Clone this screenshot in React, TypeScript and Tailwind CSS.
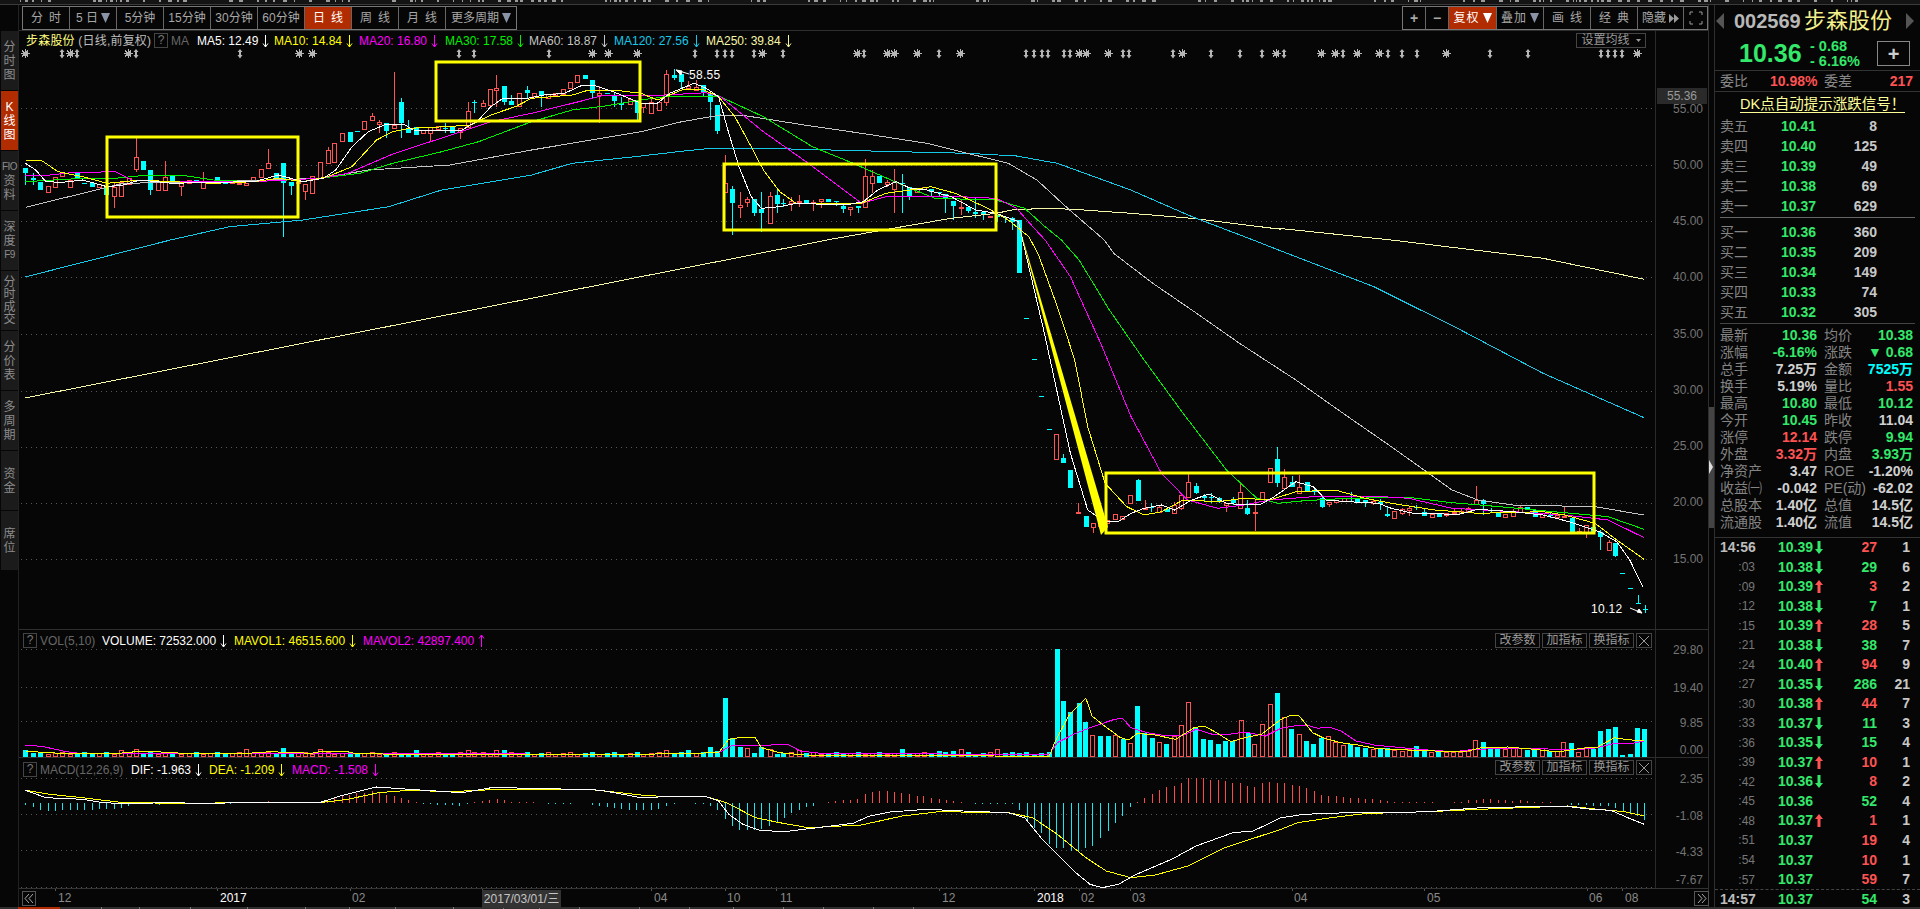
import React from "react";

type Pt = [number, number];
type Candle = { x: number; t: number; b: number; h: number; l: number; up: boolean };

const RED = "#ff5252";
const GREEN = "#33e86a";
const CYAN = "#00ffff";

// traced from crops of the chart, each crop has its own scale
const pa = (x: number, y: number): Pt => [x / 2.45, y / 3];
const pb = (x: number, y: number): Pt => [640 + x / 2.45, y / 3];
const pc = (x: number, y: number): Pt => [1000 + x / 2.306, 220 + y / 3];
const va = (x: number, y: number): Pt => [x / 2.45, 620 + y / 3];
const vb = (x: number, y: number): Pt => [640 + x / 2.45, 620 + y / 3];
const vc = (x: number, y: number): Pt => [1280 + x / 3, 620 + y / 3];

const flat = (fn: (x: number, y: number) => Pt, n: number[]): Pt[] => {
  const out: Pt[] = [];
  for (let i = 0; i < n.length; i += 2) out.push(fn(n[i], n[i + 1]));
  return out;
};
const toPoints = (p: Pt[]) => p.map(([x, y]) => `${x.toFixed(1)},${y.toFixed(1)}`).join(" ");

const ma5 = [
  ...flat(pa, [60,490,85,510,110,545,150,547,200,540,260,560,300,555,340,540,420,550,520,547,620,545,680,525,740,545,790,535,820,510,860,440,900,395,945,372,990,375,1010,390,1090,393,1130,390,1170,360,1200,320,1230,295,1290,295,1330,285,1380,280,1420,258,1450,255,1500,275,1568,310]),
  ...flat(pb, [40,310,70,280,130,250,160,265,190,290,215,400,240,500,270,590,295,625,340,620,380,610,500,615,545,605,580,570,625,545,660,565,700,570,760,590,820,630,870,640,925,665]),
  ...flat(pc, [55,90,100,340,130,520,160,700,200,870,240,905,270,905,300,880,330,865,370,855,400,870,440,840,480,822,520,850,560,855,600,852,630,830,680,785,720,800,750,840,800,845,870,850,900,865,950,880,1000,880,1050,885,1100,868,1180,875,1250,885,1310,905,1380,935,1420,965,1450,1020,1480,1100]),
];
const ma10 = [
  ...flat(pa, [60,480,100,482,140,515,200,530,260,550,340,540,420,545,520,550,620,545,680,535,740,545,800,530,860,500,920,420,960,395,1000,385,1090,380,1150,375,1200,345,1260,320,1300,295,1400,285,1440,270,1500,270,1568,280]),
  ...flat(pb, [40,300,100,270,150,268,190,290,230,350,270,440,300,510,340,575,380,610,450,610,540,610,600,580,660,570,710,560,770,580,850,625,900,660,950,710]),
  ...flat(pc, [85,100,130,260,170,420,200,620,240,790,290,860,330,885,370,875,420,840,500,845,560,835,620,840,680,815,770,810,840,835,900,850,1000,870,1100,880,1250,875,1300,885,1370,910,1420,960,1483,1018]),
];
const ma20 = [
  ...flat(pa, [60,528,120,525,170,518,280,515,320,540,400,545,520,545,620,545,700,540,780,535,850,520,960,462,1040,430,1120,398,1200,365,1300,340,1400,310,1480,285,1568,285]),
  ...flat(pb, [60,285,160,278,195,290,300,395,410,490,540,610,600,590,680,590,780,590,870,595,920,625,960,680,990,720]),
  ...flat(pc, [160,170,230,370,300,590,370,760,430,840,500,865,560,855,620,840,740,828,880,830,940,835,1040,865,1180,875,1300,885,1400,900,1483,953]),
];
const ma30 = [
  ...flat(pa, [60,545,200,535,280,535,360,525,440,525,520,540,620,545,780,535,880,520,960,490,1080,455,1170,425,1300,365,1400,330,1480,318,1568,300]),
  ...flat(pb, [60,290,190,288,300,350,420,440,520,490,640,555,720,595,870,600,940,625,990,680,1030,720]),
  ...flat(pc, [180,120,250,270,330,420,420,580,520,750,590,835,640,850,700,842,800,835,940,832,1040,848,1150,860,1300,878,1400,890,1483,928]),
];
const ma60 = [
  ...flat(pa, [60,622,300,550,520,545,780,535,900,510,1100,495,1300,450,1568,395]),
  ...flat(pb, [100,365,195,345,260,348,400,375,540,400,700,430,800,460,900,490,970,540,1050,630,1135,720]),
  ...flat(pc, [260,100,350,190,440,270,550,370,680,480,800,590,900,680,1040,810,1100,840,1180,855,1370,860,1483,885]),
];
const ma120: Pt[] = [
  [24, 277],
  ...flat(pa, [415,720,560,680,740,660,950,620,1080,570,1300,525,1400,490,1568,468]),
  ...flat(pb, [90,455,170,445,300,445,630,455,800,460,920,468,1020,490,1200,570,1350,650,1500,720]),
  ...flat(pc, [640,90,860,200,1060,330,1250,460,1483,593]),
];
const ma250: Pt[] = [
  [24, 398],
  ...flat(pb, [465,718,640,680,760,655,870,640,910,630,990,625,1060,628,1200,640,1350,655,1568,688]),
  ...flat(pc, [640,25,900,60,1250,115,1483,178]),
];

const mavol1 = [
  ...flat(va, [60,390,90,393,160,398,280,398,330,392,380,392,460,398,590,398,660,392,760,397,780,392,850,392,870,398,1000,400,1350,400,1568,400]),
  ...flat(vb, [190,395,215,355,240,350,280,350,295,380,340,395,400,402,1000,406,1015,360,1050,280,1090,232,1105,285,1130,310,1175,350,1195,357,1215,338,1250,340,1310,355,1355,320,1380,315,1410,335,1445,362,1480,350,1520,340,1568,295]),
  ...flat(vc, [30,283,55,285,95,335,130,352,180,365,230,372,290,383,400,388,520,392,560,390,600,380,680,378,760,385,830,393,900,382,950,378,1000,350,1040,356,1090,360]),
];
const mavol2 = [
  ...flat(va, [60,373,100,376,160,392,200,398,400,397,650,397,860,398,1000,398,1568,400]),
  ...flat(vb, [190,395,220,375,280,374,360,370,390,390,450,398,1000,400,1020,365,1060,340,1100,320,1160,295,1180,292,1200,320,1240,335,1290,345,1330,342,1360,325,1400,340,1440,340,1480,333,1530,345,1568,322]),
  ...flat(vc, [50,313,80,313,110,322,145,318,180,330,225,360,280,372,380,382,450,388,520,392,580,385,700,382,800,384,900,385,950,380,1000,367,1050,368,1090,360]),
];
const dif = [
  ...flat(va, [60,508,110,530,200,535,250,545,310,548,400,545,500,547,600,545,700,545,780,545,830,525,880,510,920,498,1000,505,1130,515,1180,505,1210,498,1300,503,1440,505,1480,510,1568,530]),
  ...flat(vb, [60,527,160,527,190,540,215,580,250,610,290,628,350,632,420,622,520,607,560,585,610,573,700,565,790,570,900,575,940,590,980,650,1020,700,1060,750,1100,790,1130,800,1170,790,1210,762,1300,715,1360,675,1450,635,1500,630,1568,590]),
  ...flat(vc, [70,580,200,575,330,575,440,572,600,560,850,555,930,565,990,568,1040,590,1090,610]),
];
const dea = [
  ...flat(va, [60,508,120,520,200,530,300,545,450,547,600,545,780,545,850,535,925,515,1000,508,1100,512,1220,505,1440,505,1568,522]),
  ...flat(vb, [60,527,160,527,210,545,280,590,340,605,410,620,540,612,640,585,730,572,900,575,960,590,1020,640,1090,710,1140,750,1200,770,1260,762,1340,735,1430,680,1568,625]),
  ...flat(vc, [50,605,150,590,250,578,330,575,440,572,600,565,720,560,860,555,950,565,1030,572,1090,585]),
];

const mk = (fn: (x: number, y: number) => Pt, up: boolean) => (x: number, t: number, b: number, h?: number, l?: number): Candle => {
  const [rx, rt] = fn(x, t);
  const rb = fn(x, b)[1];
  return { x: rx, t: rt, b: rb, h: h === undefined ? rt : fn(x, h)[1], l: l === undefined ? rb : fn(x, l)[1], up };
};
const ar = mk(pa, true), ac = mk(pa, false), br = mk(pb, true), bc = mk(pb, false), cr = mk(pc, true), cc = mk(pc, false);

const candles: Candle[] = [
  ac(60,505,520,505,555),ac(78,535,540,520,555),ac(96,545,570),ar(114,558,575),ar(132,530,560),ar(150,517,527),ar(168,540,562),ac(186,520,538),ac(204,548,552),ac(222,548,560),ar(240,552,562),ac(258,560,585),ar(276,560,587,547,625),ar(295,545,587),ar(313,535,552),ar(331,470,507,413,515),ac(349,483,510),ac(366,510,570,510,585),ar(385,545,570),ar(403,530,570,483),ac(420,525,548),ar(440,545,558,545,588),ar(460,540,550),ac(478,540,548),ar(495,545,565,517),ar(512,545,550),ac(530,532,550),ac(548,548,553),ar(565,545,548),ar(583,548,552),ar(601,550,555),ar(618,530,543),ar(638,508,530),ar(655,490,505,447),ac(673,520,540),ac(692,490,550,490,710),ac(710,545,557,545,585),ar(728,545,548),ar(745,552,572,552,600),ar(763,527,578),ar(782,485,535),ar(800,450,490,440),ar(817,430,485),ar(836,398,422),ac(854,395,425),ac(872,392,396),ar(890,362,387),ar(908,347,360,340),ar(925,365,372,360,400),ac(944,370,392,370,415),ar(962,375,385,215),ac(981,305,370,295,415),ac(998,385,398,360),ac(1016,380,405),ar(1033,390,400),ar(1052,382,398,382,422),ar(1070,378,388),ac(1088,385,388,368,400),ac(1106,378,398),ar(1124,385,395,385,417),ar(1143,332,380,305),ac(1160,305,310,300,340),ar(1180,310,318,300),ar(1197,268,315),ar(1213,265,270,225,320),ac(1233,257,305,257,315),ac(1250,303,316,285),ar(1268,280,318),ac(1288,270,280,258,298),ar(1305,278,288),ac(1322,273,288,273,320),ar(1340,282,295),ar(1358,278,285),ar(1376,268,283),ar(1395,247,265),ar(1412,225,245),ac(1432,225,237),ac(1449,240,280,240,295),ar(1466,278,285,258,370),ac(1485,278,282),ac(1503,285,302,280,320),ac(1520,310,315,290,330),ar(1540,298,312),ac(1558,300,340,300,365),
  br(5,310,320,310,340),br(25,305,340,290),br(43,305,330),br(62,222,305,210,318),bc(80,225,235,208,240),bc(97,222,245,222,268),br(115,258,265,243),br(134,260,270,240),bc(152,255,275,255,290),bc(170,280,305,280,360),bc(187,315,392,315,402),br(205,548,575,465),bc(224,568,608,558,705),br(242,615,622,575,655),br(259,597,605,590,620),bc(278,598,638,598,648),bc(295,628,638,575,695),br(315,587,670,575),bc(332,585,612,570,640),bc(349,608,611,598,622),br(368,602,608,590,632),br(386,602,606,585,620),bc(404,600,608),br(422,605,608,600,632),br(440,598,603,598,625),bc(458,598,606),bc(477,603,606,603,618),bc(494,618,628,610,638),br(513,622,628,622,648),bc(531,618,625,618,638),br(548,527,620,478),br(567,528,548,510,580),bc(584,528,550),br(602,547,552,540,560),br(621,547,567,507,640),bc(639,548,552,523,640),bc(657,560,590,560,600),br(675,565,575),br(693,562,568),bc(711,568,575,568,590),bc(730,577,580,577,592),bc(746,583,597,583,640),bc(765,603,618,603,660),br(783,620,622,600,645),bc(800,622,632,622,640),bc(819,636,641,590,655),bc(837,636,646,636,660),br(854,648,652),bc(873,645,650,645,665),bc(891,650,652,650,668),bc(908,655,665,650,690),bc(927,665,720),
  cc(42,0,158),cc(58,295,295),cc(77,418,418),cc(93,528,528),cc(110,628,628),cr(127,643,718),cc(143,714,728,702),cc(160,750,805),cr(178,875,880,848),cc(195,888,922),cr(211,910,922,910,938),cr(228,912,918),cr(245,900,908),cr(264,882,898),cr(280,888,897),cr(297,826,850),cc(315,780,842,776),cr(332,865,868,840),cc(347,860,863,850,875),cr(365,860,875,855),cc(382,868,875),cr(398,855,878,845),cr(415,825,865,820,870),cr(432,787,832,762),cc(449,798,818,790,822),cc(467,828,833,822,845),cc(484,832,835,820,848),cc(502,835,843,830,850),cr(518,850,855,850,875),cc(535,840,850,830,855),cr(552,817,865,787),cc(568,865,882,840,885),cr(585,877,880,838,932),cr(603,815,838),cr(620,745,785),cc(636,718,788,680,800),cr(653,770,805,748),cc(670,785,800,768),cr(688,802,820,765),cc(705,787,812),cc(722,812,815,805,825),cc(740,835,860,825,865),cr(756,845,853,845,862),cr(772,840,846),cr(790,835,842),cc(806,828,832,815,845),cc(822,835,845),cc(840,840,846,840,862),cr(857,843,850,838,855),cc(873,845,853,838,870),cc(891,882,888,860,890),cr(907,873,895),cr(925,868,880,865,884),cr(942,865,870,860,888),cc(958,862,865,855,870),cc(976,875,887,868,888),cr(993,883,892),cc(1010,883,890,880,892),cr(1026,880,885,878,890),cr(1044,875,880,868,885),cr(1060,873,878,868,882),cr(1078,865,872,860,875),cr(1095,840,852,798),cc(1112,840,852,836,885),cc(1130,870,873,865,878),cc(1146,880,890),cr(1163,882,892),cr(1180,872,888,868,892),cr(1197,862,875,858,880),cc(1214,860,868),cc(1231,870,890),cr(1247,880,892),cc(1265,885,888,875,895),cr(1282,885,890,880,893),cr(1298,888,892,858,895),cc(1316,895,936),cr(1333,932,936,925,936),cr(1349,915,936,915,955),cc(1366,920,936),cc(1382,935,952,930,990),cr(1401,965,990,960,992),cc(1417,970,1008,970,1012),cc(1433,1060,1060),cc(1451,1105,1105),cc(1468,1148,1148,1125,1148),cc(1484,1167,1167,1155,1178),
];

// volume, early candles get a small bar unless listed here
const volEarly: [number, number, boolean?][] = [
  [va(60,0)[0],6],[va(78,0)[0],3],[va(96,0)[0],3.5],[va(204,0)[0],4],[va(294,0)[0],6,true],[va(331,0)[0],7,true],[va(349,0)[0],3.5],[va(601,0)[0],7,true],[va(655,0)[0],4,true],[va(692,0)[0],8,false],[va(782,0)[0],7,true],[va(800,0)[0],4,true],[va(1015,0)[0],6,false],[va(1140,0)[0],6,true],[va(1158,0)[0],4,true],[va(1214,0)[0],6,true],[va(1232,0)[0],6,false],[va(1250,0)[0],4,true],
  [vb(62,0)[0],6,true],[vb(115,0)[0],6,false],[vb(170,0)[0],9,false],[vb(187,0)[0],5,false],[vb(205,0)[0],58,false],[vb(224,0)[0],18,false],[vb(242,0)[0],9,false],[vb(259,0)[0],8,true],[vb(278,0)[0],3,false],[vb(295,0)[0],9,false],[vb(315,0)[0],7,true],[vb(386,0)[0],6,true],[vb(639,0)[0],7,false],[vb(727,0)[0],5,false],[vb(765,0)[0],5,false],[vb(782,0)[0],7,true],[vb(873,0)[0],7,true],
];
const volLate: [number, number, boolean][] = [
  ...([[1018,322,0],[1035,165,0],[1052,132,0],[1072,158,0],[1088,102,0],[1105,62,1],[1125,60,0],[1143,60,0],[1162,62,1],[1180,50,0],[1197,38,1],[1216,150,0],[1233,68,0],[1251,54,0],[1269,42,1],[1287,36,0],[1305,60,1],[1323,92,1],[1340,163,1],[1358,85,0],[1378,50,0],[1395,48,0],[1414,36,0],[1432,44,0],[1449,46,0],[1469,107,1],[1486,68,0],[1503,35,1],[1522,95,1],[1540,155,1],[1557,188,0]] as number[][]).map(([x, h, u]): [number, number, boolean] => [640 + x / 2.45, h / 3, u === 1]),
  ...([[10,117,1],[30,80,0],[55,65,1],[76,44,0],[97,36,0],[120,55,0],[142,60,1],[163,42,1],[187,32,1],[208,36,0],[229,27,0],[253,23,0],[275,20,1],[296,25,0],[318,25,0],[340,18,1],[363,16,1],[385,20,1],[406,30,0],[430,14,0],[451,13,1],[472,16,0],[495,12,1],[517,12,1],[538,12,1],[562,16,1],[583,47,1],[606,42,0],[628,22,0],[649,22,0],[673,20,1],[695,25,1],[715,25,1],[739,18,0],[760,18,0],[782,25,1],[805,15,0],[827,14,1],[847,42,1],[871,38,0],[892,12,1],[915,28,1],[937,22,0],[958,75,0],[982,80,0],[1003,86,0],[1024,3,0],[1047,6,0],[1069,84,0],[1090,80,0]] as number[][]).map(([x, h, u]): [number, number, boolean] => [1280 + x / 3, h / 3, u === 1]),
];
const volBars: [number, number, boolean][] = [
  ...candles
    .filter((c) => c.x < 1052)
    .map((c, i): [number, number, boolean] => {
      const hit = volEarly.find((v) => Math.abs(v[0] - c.x) < 3.4);
      return [c.x, hit ? hit[1] : 2 + ((i * 7) % 3), hit && hit[2] !== undefined ? hit[2] : c.up];
    }),
  ...volLate,
];

// macd histogram: crop x, crop height, up
const macdBars: [number, number, boolean][] = [
  ...([[60,5,0],[78,12,0],[96,20,0],[114,25,0],[132,25,0],[150,22,0],[168,20,0],[186,20,0],[204,20,0],[222,20,0],[240,18,0],[258,18,0],[276,18,0],[294,15,0],[312,10,0],[386,5,0],[422,2,0],[562,2,0],[618,2,1],[655,5,1],[780,3,1],[798,8,1],[815,15,1],[835,20,1],[852,25,1],[870,30,1],[890,30,1],[908,35,1],[925,32,1],[943,25,1],[962,20,1],[980,15,1],[998,8,1],[1016,2,1],[1035,3,0],[1052,4,0],[1069,5,0],[1087,6,0],[1105,6,0],[1123,8,0],[1141,2,0],[1160,2,1],[1178,5,1],[1196,8,1],[1214,12,1],[1232,8,1],[1250,3,1],[1268,2,1],[1286,2,1],[1304,2,1],[1340,2,0],[1358,2,0],[1376,3,0],[1394,2,0],[1448,5,0],[1466,8,0],[1484,12,0],[1502,14,0],[1520,18,0],[1538,20,0],[1556,22,0]] as number[][]).map(([x, h, u]): [number, number, boolean] => [x / 2.45, h / 3, u === 1]),
  ...([[5,22,0],[25,20,0],[42,18,0],[62,8,0],[80,3,0],[133,2,0],[151,4,0],[169,8,0],[187,22,0],[205,48,0],[223,70,0],[241,82,0],[259,82,0],[277,80,0],[295,78,0],[314,68,0],[332,60,0],[350,45,0],[368,30,0],[386,22,0],[404,12,0],[422,8,0],[458,2,1],[476,5,1],[494,8,1],[512,10,1],[530,12,1],[548,27,1],[566,32,1],[584,35,1],[602,35,1],[620,32,1],[638,30,1],[656,27,1],[675,22,1],[692,20,1],[711,16,1],[729,13,1],[747,10,1],[765,5,1],[783,3,1],[819,2,0],[836,2,0],[855,3,0],[873,3,0],[891,3,0],[909,3,0],[927,22,0],[945,50,0],[963,75,0],[981,90,0],[999,122,0],[1017,135,0],[1035,135,0],[1053,145,0],[1071,145,0],[1088,135,0],[1106,128,0],[1124,105,0],[1143,85,0],[1161,60,0],[1179,40,0],[1197,12,0],[1215,4,1],[1233,15,1],[1251,28,1],[1269,38,1],[1287,47,1],[1305,52,1],[1323,60,1],[1341,75,1],[1359,75,1],[1377,75,1],[1395,70,1],[1413,68,1],[1431,65,1],[1449,60,1],[1467,60,1],[1485,52,1],[1503,48,1],[1521,60,1],[1539,62,1],[1557,60,1]] as number[][]).map(([x, h, u]): [number, number, boolean] => [640 + x / 2.45, h / 3, u === 1]),
  ...([[10,60,1],[32,55,1],[54,50,1],[76,45,1],[98,35,1],[120,25,1],[142,22,1],[164,20,1],[186,18,1],[208,16,1],[230,14,1],[252,12,1],[274,11,1],[296,8,1],[318,5,1],[340,3,1],[362,2,1],[384,3,1],[406,4,1],[428,2,1],[452,2,1],[496,1,1],[518,2,1],[540,4,1],[562,8,1],[584,10,1],[606,12,1],[628,12,1],[650,8,1],[672,8,1],[694,6,1],[716,8,1],[738,6,1],[760,4,1],[782,3,1],[806,2,1],[870,5,0],[892,7,0],[915,6,0],[937,8,0],[958,8,0],[982,10,0],[1003,14,0],[1025,25,0],[1047,32,0],[1069,40,0],[1090,50,0]] as number[][]).map(([x, h, u]): [number, number, boolean] => [1280 + x / 3, h / 3, u === 1]),
];

const starsA = [60,168,310,729,763,1449,1486,1558];
const arrowsA = [150,186,331,585,1122,1160,1342];
const starsB = [296,530,602,620,675,782,1072,1090,1143,1325,1556];
const arrowsB = [133,187,205,223,278,349,547,729,944,964,982,998,1036,1052,1180,1196,1304,1396,1468,1522];
const starsC = [98,133,187,241,405,873];
const arrowsC = [8,151,261,297,332,513,604,783,800,818,836];

const Grid = ({ ys }: { ys: number[] }) => (
  <g>
    {ys.map((y) => (
      <line key={y} x1={20} x2={1655} y1={y + 0.5} y2={y + 0.5} stroke="#555" strokeDasharray="1 4" />
    ))}
  </g>
);

const Line = ({ pts, color }: { pts: Pt[]; color: string }) => (
  <polyline points={toPoints(pts)} fill="none" stroke={color} strokeWidth={1} shapeRendering="crispEdges" />
);

const CandleMark = ({ c }: { c: Candle }) => {
  const x = Math.round(c.x);
  const t = Math.round(c.t);
  const b = Math.round(c.b);
  const color = c.up ? RED : CYAN;
  return (
    <g shapeRendering="crispEdges">
      <line x1={x + 0.5} x2={x + 0.5} y1={c.h} y2={t} stroke={color} />
      <line x1={x + 0.5} x2={x + 0.5} y1={b} y2={c.l} stroke={color} />
      {c.up ? (
        <rect x={x - 1.5} y={t + 0.5} width={4} height={Math.max(b - t, 1)} fill="#060606" stroke={color} />
      ) : (
        <rect x={x - 2} y={t} width={5} height={Math.max(b - t, 1)} fill={color} />
      )}
    </g>
  );
};

const Star = ({ x }: { x: number }) => (
  <g stroke="#b5b5b5" strokeWidth={1} fill="#b5b5b5" shapeRendering="crispEdges">
    <line x1={x} x2={x} y1={49} y2={58} />
    <line x1={x - 4} x2={x + 5} y1={53.5} y2={53.5} />
    <line x1={x - 3} x2={x + 3} y1={50.5} y2={56.5} />
    <line x1={x + 3} x2={x - 3} y1={50.5} y2={56.5} />
    <rect x={x - 2} y={52} width={4} height={3} />
  </g>
);

const Tick = ({ x }: { x: number }) => (
  <g fill="#b5b5b5">
    <polygon points={`${x},49 ${x + 2.5},52 ${x + 1},52 ${x + 1},55 ${x + 2.5},55 ${x},58.5 ${x - 2.5},55 ${x - 1},55 ${x - 1},52 ${x - 2.5},52`} />
  </g>
);

function PricePlot() {
  return (
    <svg width={1637} height={598} viewBox="18 31 1637 598" className="block">
      <Grid ys={[108, 165, 221, 277, 334, 391, 447, 503, 559]} />
      {starsA.map((x) => <Star key={`sa${x}`} x={Math.round(x / 2.45)} />)}
      {arrowsA.map((x) => <Tick key={`aa${x}`} x={Math.round(x / 2.45)} />)}
      {starsB.map((x) => <Star key={`sb${x}`} x={Math.round(640 + x / 2.45)} />)}
      {arrowsB.map((x) => <Tick key={`ab${x}`} x={Math.round(640 + x / 2.45)} />)}
      {starsC.map((x) => <Star key={`sc${x}`} x={Math.round(1280 + x / 2.45)} />)}
      {arrowsC.map((x) => <Tick key={`ac${x}`} x={Math.round(1280 + x / 2.45)} />)}
      {candles.map((c, i) => <CandleMark key={i} c={c} />)}
      <Line pts={ma250} color="#f6f6a8" />
      <Line pts={ma120} color="#16c8e8" />
      <Line pts={ma60} color="#c4c4c4" />
      <Line pts={ma30} color="#00f000" />
      <Line pts={ma20} color="#ff00ff" />
      <Line pts={ma10} color="#ffff00" />
      <Line pts={ma5} color="#ffffff" />
      <g fill="none" stroke="#ffff00" strokeWidth={3}>
        <rect x={106} y={137} width={191} height={80} />
        <rect x={435} y={62} width={204} height={59} />
        <rect x={723} y={164} width={272} height={66} />
        <rect x={1105} y={473} width={488} height={60} />
      </g>
      <polygon points="1017,222 1100,535 1107,527" fill="#ffff00" />
      <text x={688} y={79} fill="#fff" fontSize={12} letterSpacing={0.3}>58.55</text>
      <path d="M675 70 L688 74 M675 70 l5 5 l1 -4 z" stroke="#fff" fill="#fff" />
      <text x={1590} y={613} fill="#fff" fontSize={12} letterSpacing={0.3}>10.12</text>
      <path d="M1629 608 L1641 613 M1641 613 l-5 -1 l2 -3 z" stroke="#fff" fill="#fff" />
    </svg>
  );
}

function VolPlot() {
  return (
    <svg width={1637} height={128} viewBox="18 629 1637 128" className="block">
      <Grid ys={[648, 686, 720]} />
      {volBars.map(([x, h, up], i) => {
        const rx = Math.round(x);
        const top = Math.round(755 - h);
        return up ? (
          <rect key={i} x={rx - 1.5} y={top + 0.5} width={4} height={Math.max(755 - top, 1)} fill="none" stroke={RED} shapeRendering="crispEdges" />
        ) : (
          <rect key={i} x={rx - 2} y={top} width={5} height={Math.max(756 - top, 1)} fill={CYAN} shapeRendering="crispEdges" />
        );
      })}
      <Line pts={mavol2} color="#ff00ff" />
      <Line pts={mavol1} color="#ffff00" />
    </svg>
  );
}

function MacdPlot() {
  return (
    <svg width={1637} height={131} viewBox="18 757 1637 131" className="block">
      <Grid ys={[777, 813, 849, 886]} />
      {macdBars.map(([x, h, up], i) => {
        const rx = Math.round(x) + 0.5;
        return <line key={i} x1={rx} x2={rx} y1={802} y2={up ? 802 - h : 802 + h} stroke={up ? "#ff4848" : "#1ae6f0"} shapeRendering="crispEdges" />;
      })}
      <Line pts={dea} color="#ffff00" />
      <Line pts={dif} color="#ffffff" />
    </svg>
  );
}

const ThinArrow = ({ color, up }: { color: string; up?: boolean }) => (
  <svg width={7} height={14} viewBox="0 0 7 14" className="shrink-0">
    {up ? (
      <path d="M3.5 13V1M1 4.5L3.5 1L6 4.5" stroke={color} fill="none" />
    ) : (
      <path d="M3.5 1V13M1 9.5L3.5 13L6 9.5" stroke={color} fill="none" />
    )}
  </svg>
);

const QuestionBox = () => (
  <span className="w-[14px] h-[15px] border border-[#444] text-[#777] text-[12px] leading-[13px] text-center shrink-0">?</span>
);

const MaItem = ({ text, color, className }: { text: string; color: string; className: string }) => (
  <div className={"flex items-center gap-[4px] shrink-0 " + className}>
    <span style={{ color }}>{text}</span>
    <ThinArrow color={color} />
  </div>
);

const PanelButton = ({ label }: { label: string }) => (
  <span className="w-[45px] h-[15px] border border-[#444] text-[#999] text-[12px] leading-[13px] text-center">{label}</span>
);

function PanelButtons({ className }: { className: string }) {
  return (
    <div className={"absolute flex gap-[2px] " + className}>
      <PanelButton label="改参数" />
      <PanelButton label="加指标" />
      <PanelButton label="换指标" />
      <span className="w-[16px] h-[15px] border border-[#444] flex items-center justify-center">
        <svg width={10} height={10} viewBox="0 0 10 10"><path d="M0 0L10 10M10 0L0 10" stroke="#999" /></svg>
      </span>
    </div>
  );
}

function AxisLabels({ top, labels }: { top: number; labels: [number, string][] }) {
  return (
    <div className="relative w-[53px] border-l border-[#2a2a2a] shrink-0">
      {labels.map(([y, t]) => (
        <span key={t} className="absolute right-[5px] text-[12px] leading-[14px] text-[#747474]" style={{ top: y - top - 7 }}>
          {t}
        </span>
      ))}
    </div>
  );
}

const DownTri = ({ color = "#8a94a6" }: { color?: string }) => (
  <svg width={9} height={10} viewBox="0 0 9 10" className="shrink-0"><polygon points="0,0 9,0 4.5,10" fill={color} /></svg>
);

const Tab = ({ className, active, children }: { className: string; active?: boolean; children: React.ReactNode }) => (
  <div className={"h-full flex items-center justify-center gap-[3px] text-[12px] border-r border-[#666] last:border-r-0 " + (active ? "bg-[#b12c00] text-white " : "text-[#a8a8a8] ") + className}>
    {children}
  </div>
);

function Toolbar() {
  return (
    <div className="h-[26px] shrink-0 flex items-start justify-between pt-[1px] pl-[3px] border-b border-[#2e2e2e]">
      <div className="flex h-[24px] border border-[#777]">
        <Tab className="w-[47px] gap-[6px]"><span>分</span><span>时</span></Tab>
        <Tab className="w-[47px]"><span>5 日</span><DownTri /></Tab>
        <Tab className="w-[47px]">5分钟</Tab>
        <Tab className="w-[47px]">15分钟</Tab>
        <Tab className="w-[47px]">30分钟</Tab>
        <Tab className="w-[47px]">60分钟</Tab>
        <Tab className="w-[47px] gap-[6px]" active><span>日</span><span>线</span></Tab>
        <Tab className="w-[47px] gap-[6px]"><span>周</span><span>线</span></Tab>
        <Tab className="w-[47px] gap-[6px]"><span>月</span><span>线</span></Tab>
        <Tab className="w-[70px]"><span>更多周期</span><DownTri /></Tab>
      </div>
      <div className="flex h-[24px] border border-[#777]">
        <Tab className="w-[23px]"><span className="font-bold text-[14px]">+</span></Tab>
        <Tab className="w-[23px]"><span className="font-bold text-[14px]">−</span></Tab>
        <Tab className="w-[48px]" active><span className="tracking-[1px]">复权</span><DownTri color="#ffffff" /></Tab>
        <Tab className="w-[47px]"><span className="tracking-[1px]">叠加</span><DownTri /></Tab>
        <Tab className="w-[47px] gap-[6px]"><span>画</span><span>线</span></Tab>
        <Tab className="w-[47px] gap-[6px]"><span>经</span><span>典</span></Tab>
        <Tab className="w-[46px] gap-[2px]">
          <span>隐藏</span>
          <svg width={10} height={9} viewBox="0 0 10 9"><path d="M0 0L5 4.5L0 9zM5 0L10 4.5L5 9z" fill="#9a9a9a" /></svg>
        </Tab>
        <Tab className="w-[23px]">
          <svg width={14} height={14} viewBox="0 0 14 14"><path d="M1 4V1H4M10 1H13V4M13 10V13H10M4 13H1V10" stroke="#9a9a9a" fill="none" /></svg>
        </Tab>
      </div>
    </div>
  );
}

const navItems: { lines: string[]; tight?: boolean; active?: boolean }[] = [
  { lines: ["分", "时", "图"] },
  { lines: ["K", "线", "图"], active: true },
  { lines: ["FIO", "资", "料"] },
  { lines: ["深", "度", "F9"] },
  { lines: ["分", "时", "成", "交"], tight: true },
  { lines: ["分", "价", "表"] },
  { lines: ["多", "周", "期"] },
  { lines: ["资", "金"] },
  { lines: ["席", "位"] },
];

function LeftNav() {
  return (
    <div className="w-[19px] shrink-0 pt-[26px] flex flex-col gap-[1px] border-r border-[#222] pl-[1px]">
      {navItems.map((n) => (
        <div
          key={n.lines.join("")}
          className={
            "h-[59px] w-[17px] flex flex-col items-center justify-center text-[12px] " +
            (n.tight ? "leading-[12.5px] " : "leading-[14px] ") +
            (n.active ? "bg-[#b12c00] text-white" : "bg-[#1b1b1b] text-[#8c8c8c]")
          }
        >
          {n.lines.map((l, i) => (
            <span key={i} className={l.length > 1 ? "text-[10px] tracking-[-0.5px]" : ""}>{l}</span>
          ))}
        </div>
      ))}
    </div>
  );
}

const dates: { x: number; t: string; hi?: boolean }[] = [
  { x: 57, t: "12" },
  { x: 219, t: "2017", hi: true },
  { x: 351, t: "02" },
  { x: 653, t: "04" },
  { x: 726, t: "10" },
  { x: 779, t: "11" },
  { x: 941, t: "12" },
  { x: 1036, t: "2018", hi: true },
  { x: 1080, t: "02" },
  { x: 1131, t: "03" },
  { x: 1293, t: "04" },
  { x: 1426, t: "05" },
  { x: 1588, t: "06" },
  { x: 1624, t: "08" },
];
const dateTicks = [54, 216, 349, 481, 650, 724, 775, 938, 1033, 1078, 1129, 1291, 1423, 1586, 1621];

function DateRow() {
  return (
    <div className="relative h-[19px] shrink-0 border-t border-[#333]">
      {dateTicks.map((x) => (
        <span key={x} className="absolute top-0 w-[1px] h-[2px] bg-[#555]" style={{ left: x - 18 }} />
      ))}
      <span className="absolute left-[3px] top-[2px] w-[14px] h-[15px] border border-[#555] flex items-center justify-center">
        <svg width={10} height={9} viewBox="0 0 10 9"><path d="M5 0L1 4.5L5 9M9 0L5 4.5L9 9" stroke="#aaa" fill="none" /></svg>
      </span>
      {dates.map((d) => (
        <span key={d.x} className={"absolute top-[1px] text-[12px] leading-[16px] " + (d.hi ? "text-white" : "text-[#8a8a8a]")} style={{ left: d.x - 18 }}>
          {d.t}
        </span>
      ))}
      <span className="absolute left-[463px] top-[1px] h-[18px] w-[79px] bg-[#333] text-[#c4c4c4] text-[12px] leading-[18px] text-center">2017/03/01/三</span>
      <span className="absolute left-[1675px] top-[2px] w-[15px] h-[15px] border border-[#555] flex items-center justify-center">
        <svg width={10} height={9} viewBox="0 0 10 9"><path d="M1 0L5 4.5L1 9M5 0L9 4.5L5 9" stroke="#aaa" fill="none" /></svg>
      </span>
    </div>
  );
}

const book: [string, string, string][] = [
  ["卖五", "10.41", "8"],
  ["卖四", "10.40", "125"],
  ["卖三", "10.39", "49"],
  ["卖二", "10.38", "69"],
  ["卖一", "10.37", "629"],
  ["买一", "10.36", "360"],
  ["买二", "10.35", "209"],
  ["买三", "10.34", "149"],
  ["买四", "10.33", "74"],
  ["买五", "10.32", "305"],
];

const W = "text-[#d0d0d0]";
const G = "text-[#33e86a]";
const R = "text-[#ff5252]";
const C = "text-[#00ffff]";
const stats: [string, string, string, string, string, string][] = [
  ["最新", "10.36", G, "均价", "10.38", G],
  ["涨幅", "-6.16%", G, "涨跌", "▼ 0.68", G],
  ["总手", "7.25万", W, "金额", "7525万", C],
  ["换手", "5.19%", W, "量比", "1.55", R],
  ["最高", "10.80", G, "最低", "10.12", G],
  ["今开", "10.45", G, "昨收", "11.04", W],
  ["涨停", "12.14", R, "跌停", "9.94", G],
  ["外盘", "3.32万", R, "内盘", "3.93万", G],
  ["净资产", "3.47", W, "ROE", "-1.20%", W],
  ["收益㈠", "-0.042", W, "PE(动)", "-62.02", W],
  ["总股本", "1.40亿", W, "总值", "14.5亿", W],
  ["流通股", "1.40亿", W, "流值", "14.5亿", W],
];

const trades: [string, string, number, string, boolean, string][] = [
  ["14:56", "10.39", -1, "27", true, "1"],
  [":03", "10.38", -1, "29", false, "6"],
  [":09", "10.39", 1, "3", true, "2"],
  [":12", "10.38", -1, "7", false, "1"],
  [":15", "10.39", 1, "28", true, "5"],
  [":21", "10.38", -1, "38", false, "7"],
  [":24", "10.40", 1, "94", true, "9"],
  [":27", "10.35", -1, "286", false, "21"],
  [":30", "10.38", 1, "44", true, "7"],
  [":33", "10.37", -1, "11", false, "3"],
  [":36", "10.35", -1, "15", false, "4"],
  [":39", "10.37", 1, "10", true, "1"],
  [":42", "10.36", -1, "8", true, "2"],
  [":45", "10.36", 0, "52", false, "4"],
  [":48", "10.37", 1, "1", true, "1"],
  [":51", "10.37", 0, "19", true, "4"],
  [":54", "10.37", 0, "10", true, "1"],
  [":57", "10.37", 0, "59", true, "7"],
];

const BoldArrow = ({ dir }: { dir: number }) =>
  dir === 0 ? null : (
    <svg width={8} height={13} viewBox="0 0 8 13" className="shrink-0">
      {dir < 0 ? (
        <polygon points="2.5,0 5.5,0 5.5,8 8,8 4,13 0,8 2.5,8" fill={GREEN} />
      ) : (
        <polygon points="2.5,13 5.5,13 5.5,5 8,5 4,0 0,5 2.5,5" fill={RED} />
      )}
    </svg>
  );

const TradeRow = ({ time, price, dir, vol, up, n, h }: { time: string; price: string; dir: number; vol: string; up: boolean; n: string; h: string }) => (
  <div className={"flex items-center font-bold text-[14px] pl-[5px] " + h}>
    <span className={"w-[35px] text-right " + (time.length > 3 ? "text-[#bdbdbd]" : "text-[#777] text-[12px] font-normal")}>{time}</span>
    <span className={"ml-[23px] w-[36px] " + G}>{price}</span>
    <span className="w-[9px] flex justify-end"><BoldArrow dir={dir} /></span>
    <span className={"w-[54px] text-right " + (up ? R : G)}>{vol}</span>
    <span className="w-[33px] text-right text-[#c8c8c8]">{n}</span>
  </div>
);

function Sidebar() {
  return (
    <div className="w-[205px] shrink-0 text-[14px]">
      <div className="h-[66px] border-b border-[#333] flex flex-col">
        <div className="h-[32px] flex items-center">
          <svg width={8} height={16} viewBox="0 0 8 16" className="ml-[1px]"><polygon points="8,0 8,16 0,8" fill="#555" /></svg>
          <span className="ml-[10px] w-[70px] text-[20px] font-bold text-[#b8b8b8]">002569</span>
          <span className="text-[22px] leading-none text-[#f4f08c]">步森股份</span>
          <svg width={8} height={16} viewBox="0 0 8 16" className="ml-[14px]"><polygon points="0,0 0,16 8,8" fill="#555" /></svg>
        </div>
        <div className="h-[33px] flex items-center pl-[24px]">
          <span className={"w-[71px] text-[25px] font-bold leading-none " + G}>10.36</span>
          <div className={"flex flex-col w-[67px] text-[14.5px] font-bold leading-[15px] " + G}>
            <span>- 0.68</span>
            <span>- 6.16%</span>
          </div>
          <span className="w-[33px] h-[25px] border border-[#888] flex items-center justify-center text-[20px] font-bold leading-none text-[#ccc]">+</span>
        </div>
      </div>
      <div className="h-[21px] border-b border-[#333] flex items-center pl-[5px] pr-[7px]">
        <span className="w-[50px] text-[#888]">委比</span>
        <span className={"w-[54px] font-bold " + R}>10.98%</span>
        <span className="text-[#888]">委差</span>
        <span className={"flex-1 text-right font-bold " + R}>217</span>
      </div>
      <div className="h-[24px] flex items-center pl-[25px]">
        <span className="text-[14.5px] leading-[16px] text-[#ffff99] border-b border-[#ffff99] whitespace-nowrap">DK点自动提示涨跌信号！</span>
      </div>
      {book.slice(0, 5).map((b) => <BookRow key={b[0]} row={b} />)}
      <div className="h-[5px] mx-[5px] border-t border-[#666] mt-[1px]" />
      {book.slice(5).map((b) => <BookRow key={b[0]} row={b} />)}
      <div className="h-[3px] mx-[5px] border-b border-[#444] mt-[-1px]" />
      <div className="pt-[3px] pb-[6px] border-b border-[#333]">
        {stats.map((s) => (
          <div key={s[0]} className="h-[17px] flex items-center pl-[5px] pr-[7px] leading-[17px]">
            <div className="w-[97px] flex justify-between">
              <span className="text-[#848484]">{s[0]}</span>
              <span className={"font-bold " + s[2]}>{s[1]}</span>
            </div>
            <div className="w-[89px] ml-[7px] flex justify-between">
              <span className="text-[#848484]">{s[3]}</span>
              <span className={"font-bold " + s[5]}>{s[4]}</span>
            </div>
          </div>
        ))}
      </div>
      {trades.map((t) => (
        <TradeRow key={t[0]} time={t[0]} price={t[1]} dir={t[2]} vol={t[3]} up={t[4]} n={t[5]} h="h-[19.53px]" />
      ))}
      <div className="border-t border-dashed border-[#444]">
        <TradeRow time="14:57" price="10.37" dir={0} vol="54" up={false} n="3" h="h-[18px]" />
      </div>
    </div>
  );
}

const BookRow = ({ row }: { row: [string, string, string] }) => (
  <div className="h-[20px] flex items-center pl-[5px]">
    <span className="w-[61px] text-[#848484]">{row[0]}</span>
    <span className={"w-[36px] font-bold " + G}>{row[1]}</span>
    <span className="w-[60px] text-right font-bold text-[#c8c8c8]">{row[2]}</span>
  </div>
);

function TopStrip() {
  const marks: [number, number][] = [];
  let seed = 17;
  for (let x = 20; x < 1900; ) {
    seed = (seed * 137 + 41) % 1009;
    const w = 1 + (seed % 4);
    marks.push([x, w]);
    x += w + 2 + (seed % 23 === 0 ? 40 : seed % 5 === 0 ? 12 : seed % 7);
  }
  return (
    <div className="h-[5px] shrink-0 bg-[#141414] border-b border-[#3a3a3a]">
      <svg width={1920} height={3} className="block">
        {marks.map(([x, w]) => <rect key={x} x={x} y={0} width={w} height={2} fill="#9a9a9a" />)}
      </svg>
    </div>
  );
}

const bottomTabs = [42, 38, 51, 57, 58, 44, 46, 58, 50, 36, 40, 60, 50, 44, 50, 40, 50, 40];

export default function App() {
  return (
    <div className="w-[1920px] h-[909px] overflow-hidden bg-[#060606] flex flex-col font-['Liberation_Sans','Noto_Sans_CJK_SC',sans-serif]">
      <TopStrip />
      <div className="flex-1 flex min-h-0">
        <LeftNav />
        <div className="flex-1 flex min-w-0">
          <div className="w-[1689px] shrink-0 flex flex-col">
            <Toolbar />
            <div className="relative flex h-[598px] shrink-0">
              <div className="w-[1636px] overflow-hidden shrink-0"><PricePlot /></div>
              <AxisLabels top={31} labels={[[109,"55.00"],[165,"50.00"],[221,"45.00"],[277,"40.00"],[334,"35.00"],[390,"30.00"],[446,"25.00"],[502,"20.00"],[559,"15.00"]]} />
              <span className="absolute right-[1px] top-[57px] w-[50px] h-[16px] bg-[#2a2a2a] text-[#9a9a9a] text-[12px] leading-[16px] text-center">55.36</span>
              <div className="absolute left-[7px] top-[2px] h-[15px] flex items-center text-[12px] whitespace-nowrap">
                <span className="w-[128px] tracking-[0.2px] text-[#ffff80]">步森股份 <span className="text-[#bdbdbd]">(日线,前复权)</span></span>
                <QuestionBox />
                <span className="w-[26px] ml-[3px] text-[#666]">MA</span>
                <MaItem text="MA5: 12.49" color="#ffffff" className="w-[77px]" />
                <MaItem text="MA10: 14.84" color="#ffff00" className="w-[85px]" />
                <MaItem text="MA20: 16.80" color="#ff00ff" className="w-[86px]" />
                <MaItem text="MA30: 17.58" color="#00f000" className="w-[84px]" />
                <MaItem text="MA60: 18.87" color="#c4c4c4" className="w-[85px]" />
                <MaItem text="MA120: 27.56" color="#16c8e8" className="w-[92px]" />
                <MaItem text="MA250: 39.84" color="#f6f6a8" className="w-[85px]" />
              </div>
              <span className="absolute left-[1557px] top-[2px] w-[70px] h-[15px] border border-[#444] text-[#9a9a9a] text-[12px] leading-[13px] flex items-center justify-center gap-[6px]">
                设置均线
                <svg width={5} height={3} viewBox="0 0 5 3"><polygon points="0,0 5,0 2.5,3" fill="#9a9a9a" /></svg>
              </span>
            </div>
            <div className="relative flex h-[128px] shrink-0 border-t border-[#2e2e2e]">
              <div className="w-[1636px] overflow-hidden shrink-0"><VolPlot /></div>
              <AxisLabels top={629} labels={[[649,"29.80"],[687,"19.40"],[722,"9.85"],[749,"0.00"]]} />
              <div className="absolute left-[4px] top-[3px] h-[15px] flex items-center text-[12px] whitespace-nowrap">
                <QuestionBox />
                <span className="w-[62px] ml-[3px] text-[#666]">VOL(5,10)</span>
                <div className="w-[132px] flex items-center gap-[4px] text-white"><span>VOLUME: 72532.000</span><ThinArrow color="#fff" /></div>
                <div className="w-[129px] flex items-center gap-[4px] text-[#ffff00]"><span>MAVOL1: 46515.600</span><ThinArrow color="#ffff00" /></div>
                <div className="flex items-center gap-[4px] text-[#ff00ff]"><span>MAVOL2: 42897.400</span><ThinArrow color="#ff00ff" up /></div>
              </div>
              <PanelButtons className="left-[1476px] top-[3px]" />
            </div>
            <div className="relative flex h-[131px] shrink-0 border-t border-[#2e2e2e]">
              <div className="w-[1636px] overflow-hidden shrink-0"><MacdPlot /></div>
              <AxisLabels top={757} labels={[[778,"2.35"],[815,"-1.08"],[851,"-4.33"],[879,"-7.67"]]} />
              <div className="absolute left-[4px] top-[4px] h-[15px] flex items-center text-[12px] whitespace-nowrap">
                <QuestionBox />
                <span className="w-[91px] ml-[3px] text-[#666]">MACD(12,26,9)</span>
                <div className="w-[78px] flex items-center gap-[4px] text-white"><span>DIF: -1.963</span><ThinArrow color="#fff" /></div>
                <div className="w-[83px] flex items-center gap-[4px] text-[#ffff00]"><span>DEA: -1.209</span><ThinArrow color="#ffff00" /></div>
                <div className="flex items-center gap-[4px] text-[#ff00ff]"><span>MACD: -1.508</span><ThinArrow color="#ff00ff" /></div>
              </div>
              <PanelButtons className="left-[1476px] top-[2px]" />
            </div>
            <DateRow />
          </div>
          <div className="w-[7px] shrink-0 border-x border-[#2e2e2e] pt-[402px]">
            <div className="relative h-[121px] bg-[#444]">
              <svg width={4} height={14} viewBox="0 0 4 14" className="absolute left-0 top-[53px]"><polygon points="0,0 4,7 0,14" fill="#ddd" /></svg>
            </div>
          </div>
        </div>
        <Sidebar />
      </div>
      <div className="h-[2px] shrink-0 flex bg-[#2e2e2e] pl-[18px]">
        <span className="w-[42px] bg-[#b12c00]" />
        {bottomTabs.map((w, i) => (
          <span key={i} className="border-r border-[#777]" style={{ width: w }} />
        ))}
      </div>
    </div>
  );
}
